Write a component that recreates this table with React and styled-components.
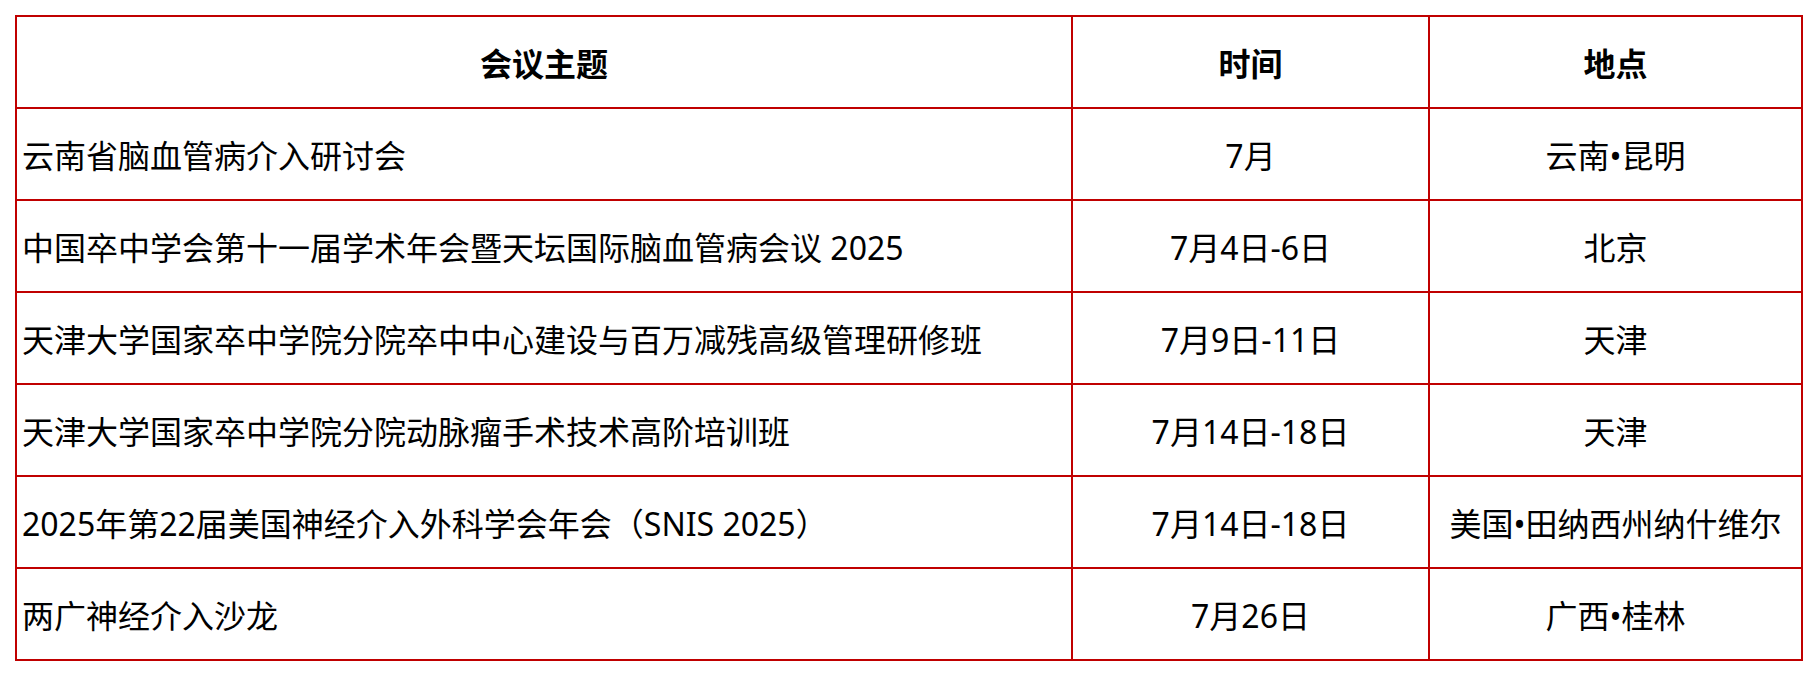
import React from 'react';
import styled, { createGlobalStyle } from 'styled-components';

const GlobalStyle = createGlobalStyle`
  html, body {
    margin: 0;
    padding: 0;
    background: #ffffff;
  }
  body {
    font-family: "Noto Sans", "Noto Sans CJK SC", sans-serif;
    color: #000000;
  }
`;

const Page = styled.div`
  padding: 15px 15px 0 15px;
  width: 1787px;
`;

const Table = styled.table`
  width: 1786px;
  border-collapse: collapse;
  table-layout: fixed;
  border: 2px solid #c00000;
`;

const HeadCell = styled.th`
  height: 90px;
  padding: 0 6px;
  border: 2px solid #c00000;
  font-size: 32px;
  font-weight: 700;
  text-align: center;
  vertical-align: middle;
`;

const Cell = styled.td`
  height: 90px;
  padding: 0 ${props => (props.center ? '2px' : '5px')};
  border: 2px solid #c00000;
  font-size: 32px;
  font-weight: 400;
  white-space: nowrap;
  text-align: ${props => (props.center ? 'center' : 'left')};
  vertical-align: middle;
`;

const meetings = [
  { title: '云南省脑血管病介入研讨会', time: '7月', place: '云南•昆明' },
  {
    title: '中国卒中学会第十一届学术年会暨天坛国际脑血管病会议 2025',
    time: '7月4日-6日',
    place: '北京',
  },
  {
    title: '天津大学国家卒中学院分院卒中中心建设与百万减残高级管理研修班',
    time: '7月9日-11日',
    place: '天津',
  },
  {
    title: '天津大学国家卒中学院分院动脉瘤手术技术高阶培训班',
    time: '7月14日-18日',
    place: '天津',
  },
  {
    title: '2025年第22届美国神经介入外科学会年会（SNIS 2025）',
    time: '7月14日-18日',
    place: '美国•田纳西州纳什维尔',
  },
  { title: '两广神经介入沙龙', time: '7月26日', place: '广西•桂林' },
];

const App = () => (
  <Page>
    <GlobalStyle />
    <Table>
      <colgroup>
        <col style={{ width: 1056 }} />
        <col style={{ width: 357 }} />
        <col style={{ width: 373 }} />
      </colgroup>
      <thead>
        <tr>
          <HeadCell>会议主题</HeadCell>
          <HeadCell>时间</HeadCell>
          <HeadCell>地点</HeadCell>
        </tr>
      </thead>
      <tbody>
        {meetings.map(m => (
          <tr key={m.title}>
            <Cell>{m.title}</Cell>
            <Cell center>{m.time}</Cell>
            <Cell center>{m.place}</Cell>
          </tr>
        ))}
      </tbody>
    </Table>
  </Page>
);

export default App;
